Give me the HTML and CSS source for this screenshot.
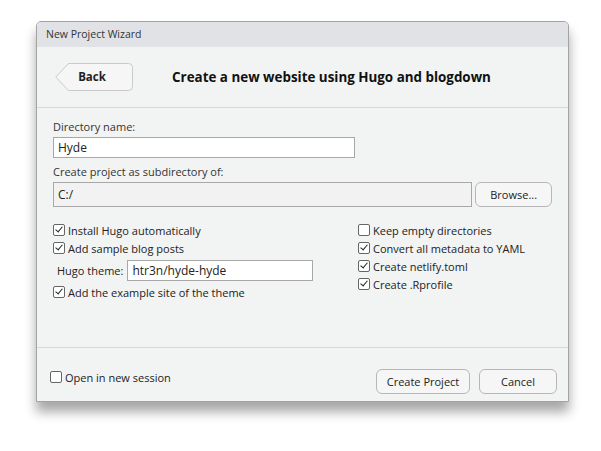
FILE: index.html
```html
<!DOCTYPE html>
<html>
<head>
<meta charset="utf-8">
<link rel="stylesheet" href="styles.css">
</head>
<body>
<div class="dialog">
  <div class="titlebar">New Project Wizard</div>
  <div class="header">
    <button class="back">
      <svg class="back-shape" width="78" height="28" viewBox="0 0 78 28"><path d="M13.5 0.5 H73.5 Q77.5 0.5 77.5 4.5 V23.5 Q77.5 27.5 73.5 27.5 H13.5 L0.8 14 Z" fill="#f6f6f6" stroke="#c9c9c9"/></svg>
      <span class="back-label">Back</span>
    </button>
    <div class="heading">Create a new website using Hugo and blogdown</div>
  </div>
  <div class="content">
    <div class="label">Directory name:</div>
    <div class="input name-input">Hyde</div>
    <div class="label label2">Create project as subdirectory of:</div>
    <div class="dir-row">
      <div class="input dir-input">C:/</div>
      <button class="btn browse">Browse...</button>
    </div>
    <div class="options">
      <div class="col">
        <div class="check"><span class="box on"></span>Install Hugo automatically</div>
        <div class="check"><span class="box on"></span>Add sample blog posts</div>
        <div class="theme-row"><span>Hugo theme:</span><div class="input theme-input">htr3n/hyde-hyde</div></div>
        <div class="check"><span class="box on"></span>Add the example site of the theme</div>
      </div>
      <div class="col col-right">
        <div class="check"><span class="box"></span>Keep empty directories</div>
        <div class="check"><span class="box on"></span>Convert all metadata to YAML</div>
        <div class="check"><span class="box on"></span>Create netlify.toml</div>
        <div class="check"><span class="box on"></span>Create .Rprofile</div>
      </div>
    </div>
  </div>
  <div class="footer">
    <div class="check session"><span class="box"></span>Open in new session</div>
    <div class="actions">
      <button class="btn create">Create Project</button>
      <button class="btn cancel">Cancel</button>
    </div>
  </div>
</div>
</body>
</html>
```
FILE: styles.css
```css
*, *::before, *::after { box-sizing: border-box; }
html, body { margin: 0; padding: 0; background: #ffffff; }
body {
  font-family: "Open Sans", "Noto Sans", sans-serif;
  font-size: 11px;
  color: #222;
  padding: 21px 0 0 36px;
  min-height: 451px;
}
.dialog {
  width: 533px;
  height: 381px;
  border: 1px solid #a3a3a3;
  border-radius: 5px 5px 0 0;
  background: #f2f3f3;
  box-shadow: 0 10px 12px rgba(0,0,0,0.35);
  display: flex;
  flex-direction: column;
}
.titlebar {
  height: 25px;
  flex: none;
  background: #e1e2e5;
  border-radius: 4px 4px 0 0;
  padding-left: 9px;
  line-height: 25px;
  font-size: 10.5px;
  color: #333;
}
.header {
  height: 61px;
  flex: none;
  border-bottom: 1px solid #d6d6d6;
  display: flex;
  align-items: center;
  padding-left: 18px;
}
.back {
  position: relative;
  width: 78px;
  height: 28px;
  padding: 0;
  border: 0;
  background: none;
  font-family: inherit;
  flex: none;
}
.back-shape { position: absolute; left: 0; top: 0; }
.back-label {
  position: relative;
  display: block;
  padding-right: 4px;
  font-weight: 700;
  font-size: 11.5px;
  color: #222;
  line-height: 28px;
  text-align: center;
}
.heading {
  flex: 1;
  text-align: center;
  font-weight: 700;
  font-size: 13.4px;
  color: #111;
  padding-right: 38px;
}
.content {
  flex: 1;
  padding: 11px 16px 0 16px;
}
.label { line-height: 16px; color: #333; }
.label2 { margin-top: 6px; }
.input {
  background: #fff;
  border: 1px solid #a8a8a8;
  height: 21px;
  line-height: 19px;
  padding-left: 4px;
  font-size: 12px;
  color: #222;
}
.name-input { width: 302px; margin-top: 2px; }
.dir-row { display: flex; gap: 3px; margin-top: 2px; }
.dir-input { width: 421px; height: 25px; line-height: 23px; background: #f2f2f2; }
.btn {
  border: 1px solid #b7b7b7;
  border-radius: 6px;
  background: #f6f6f6;
  font-family: inherit;
  font-size: 11px;
  color: #222;
  padding: 0;
}
.browse { width: 77px; height: 25px; }
.options { display: flex; margin-top: 14px; }
.col { width: 305px; display: flex; flex-direction: column; }
.col-right { width: auto; }
.check { display: flex; align-items: center; height: 18px; color: #222; }
.box {
  width: 12px; height: 12px;
  border: 1px solid #666;
  border-radius: 2px;
  background: #fff;
  margin-right: 3px;
  position: relative;
  flex: none;
}
.box.on::after {
  content: "";
  position: absolute;
  left: 3px; top: 0px;
  width: 4px; height: 7px;
  border: solid #222;
  border-width: 0 1.5px 1.5px 0;
  transform: rotate(40deg);
}
.theme-row { display: flex; align-items: center; height: 26px; padding-left: 4px; color: #222; }
.theme-row span { margin-right: 4px; }
.theme-input { width: 186px; height: 21px; }
.footer {
  height: 54px;
  flex: none;
  border-top: 1px solid #d6d6d6;
  display: flex;
  align-items: flex-end;
  justify-content: space-between;
  padding: 0 11px 7px 13px;
}
.session { margin-bottom: 8px; }
.actions { display: flex; gap: 9px; }
.create { width: 94px; height: 25px; }
.cancel { width: 78px; height: 25px; }
```
